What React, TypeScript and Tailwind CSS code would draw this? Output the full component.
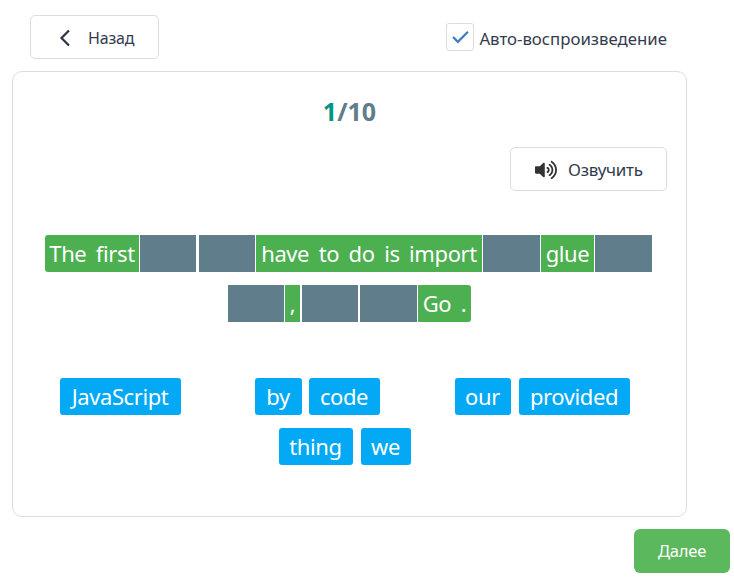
import React from 'react';
import { FaVolumeUp } from 'react-icons/fa';

// one piece of the sentence: green = given text, empty = a gap still to fill
function Segment({ text, width, gap, rounded }: { text?: string; width: number; gap: string; rounded?: string }) {
    return (
        <div
            className={`flex h-[37px] shrink-0 items-center justify-center whitespace-nowrap text-white [word-spacing:4.2px] ${gap} ${rounded ?? ''} ${text ? 'bg-[#4caf50]' : 'bg-[#607d8b]'}`}
            style={{ width }}
        >
            {text}
        </div>
    );
}

function Chip({ text, width, hidden, gap }: { text: string; width: number; hidden?: boolean; gap?: string }) {
    return (
        <div
            className={`mx-[3.5px] flex h-[37px] shrink-0 items-center justify-center rounded-[3px] bg-[#03a9f4] text-white ${hidden ? 'invisible' : ''} ${gap ?? ''}`}
            style={{ width }}
        >
            {text}
        </div>
    );
}

export default function App() {
    return (
        <div className="h-[577px] w-[734px] overflow-hidden bg-white font-['Noto_Sans',sans-serif] text-[#333c4e]">
            <div className="flex items-center justify-between pl-[30px] pr-[67px] pt-[15px]">
                <button className="flex h-[44px] w-[129px] items-center rounded-[5px] border border-[#ddd] pl-[28px] pt-[1px] text-[16px] tracking-[-0.2px]">
                    <svg viewBox="0 0 12 18" className="h-[18px] w-[12px]" fill="none" stroke="#2c3344" strokeWidth="2.2">
                        <path d="M10 1.5 2.5 9l7.5 7.5" />
                    </svg>
                    <span className="ml-[17px]">Назад</span>
                </button>
                <label className="flex items-center">
                    <span className="flex h-[28px] w-[28px] items-center justify-center rounded-[3px] border border-[#ddd]">
                        <svg viewBox="0 0 20 16" className="h-[14px] w-[19px]" fill="none" stroke="#3f7cc0" strokeWidth="2.6">
                            <path d="M1.5 8 7 13.5 18.5 2" />
                        </svg>
                    </span>
                    <span className="ml-[5px] pt-[3px] text-[16.8px]">Авто-воспроизведение</span>
                </label>
            </div>

            <div className="ml-[12px] mt-[12px] h-[446px] w-[675px] rounded-[10px] border border-[#ddd]">
                <div className="pt-[21px] text-center text-[25px] font-bold leading-[36px] text-[#607d8b]">
                    <span className="text-[#009688]">1</span>/10
                </div>
                <div className="mt-[18px] flex justify-end pr-[19px]">
                    <button className="flex h-[44px] w-[157px] items-center rounded-[5px] border border-[#ddd] pl-[24px] pt-[1px] text-[17px] tracking-[-0.3px]">
                        <FaVolumeUp className="h-[20px] w-[22px] text-[#333]" />
                        <span className="ml-[11px]">Озвучить</span>
                    </button>
                </div>

                <div className="mt-[44px] text-[22px] tracking-[-0.4px]">
                    <div className="flex pl-[32px]">
                        <Segment text="The first" width={94} gap="" rounded="rounded-l-[3px]" />
                        <Segment width={56} gap="ml-[1px]" />
                        <Segment width={56} gap="ml-[3px]" />
                        <Segment text="have to do is import" width={226} gap="ml-[1px]" />
                        <Segment width={57} gap="ml-[1px]" />
                        <Segment text="glue" width={53} gap="ml-[1px]" />
                        <Segment width={57} gap="ml-[1px]" />
                    </div>
                    <div className="mt-[13px] flex pl-[215px]">
                        <Segment width={56} gap="" />
                        <Segment text="," width={15} gap="ml-[1px]" />
                        <Segment width={56} gap="ml-[2px]" />
                        <Segment width={57} gap="ml-[2px]" />
                        <Segment text="Go ." width={53} gap="ml-[1px]" rounded="rounded-r-[3px]" />
                    </div>
                </div>

                <div className="mt-[56px] flex flex-wrap justify-center gap-y-[13px] pr-[10px] text-[22px] tracking-[-0.4px]">
                    <div className="flex w-full justify-center">
                        <Chip text="JavaScript" width={121} />
                        <Chip text="" width={60} hidden />
                        <Chip text="by" width={47} />
                        <Chip text="code" width={71} />
                        <Chip text="" width={61} hidden />
                        <Chip text="our" width={56} />
                        <Chip text="provided" width={111} gap="ml-[4.5px]" />
                    </div>
                    <div className="flex w-full justify-center">
                        <Chip text="thing" width={74} />
                        <Chip text="we" width={50} gap="ml-[4.5px]" />
                    </div>
                </div>
            </div>

            <div className="mt-[12px] flex justify-end pr-[4px]">
                <button className="h-[44px] w-[96px] rounded-[6px] bg-[#5cb85c] pt-[1px] text-[16.5px] tracking-[-0.2px] text-white">Далее</button>
            </div>
        </div>
    );
}
